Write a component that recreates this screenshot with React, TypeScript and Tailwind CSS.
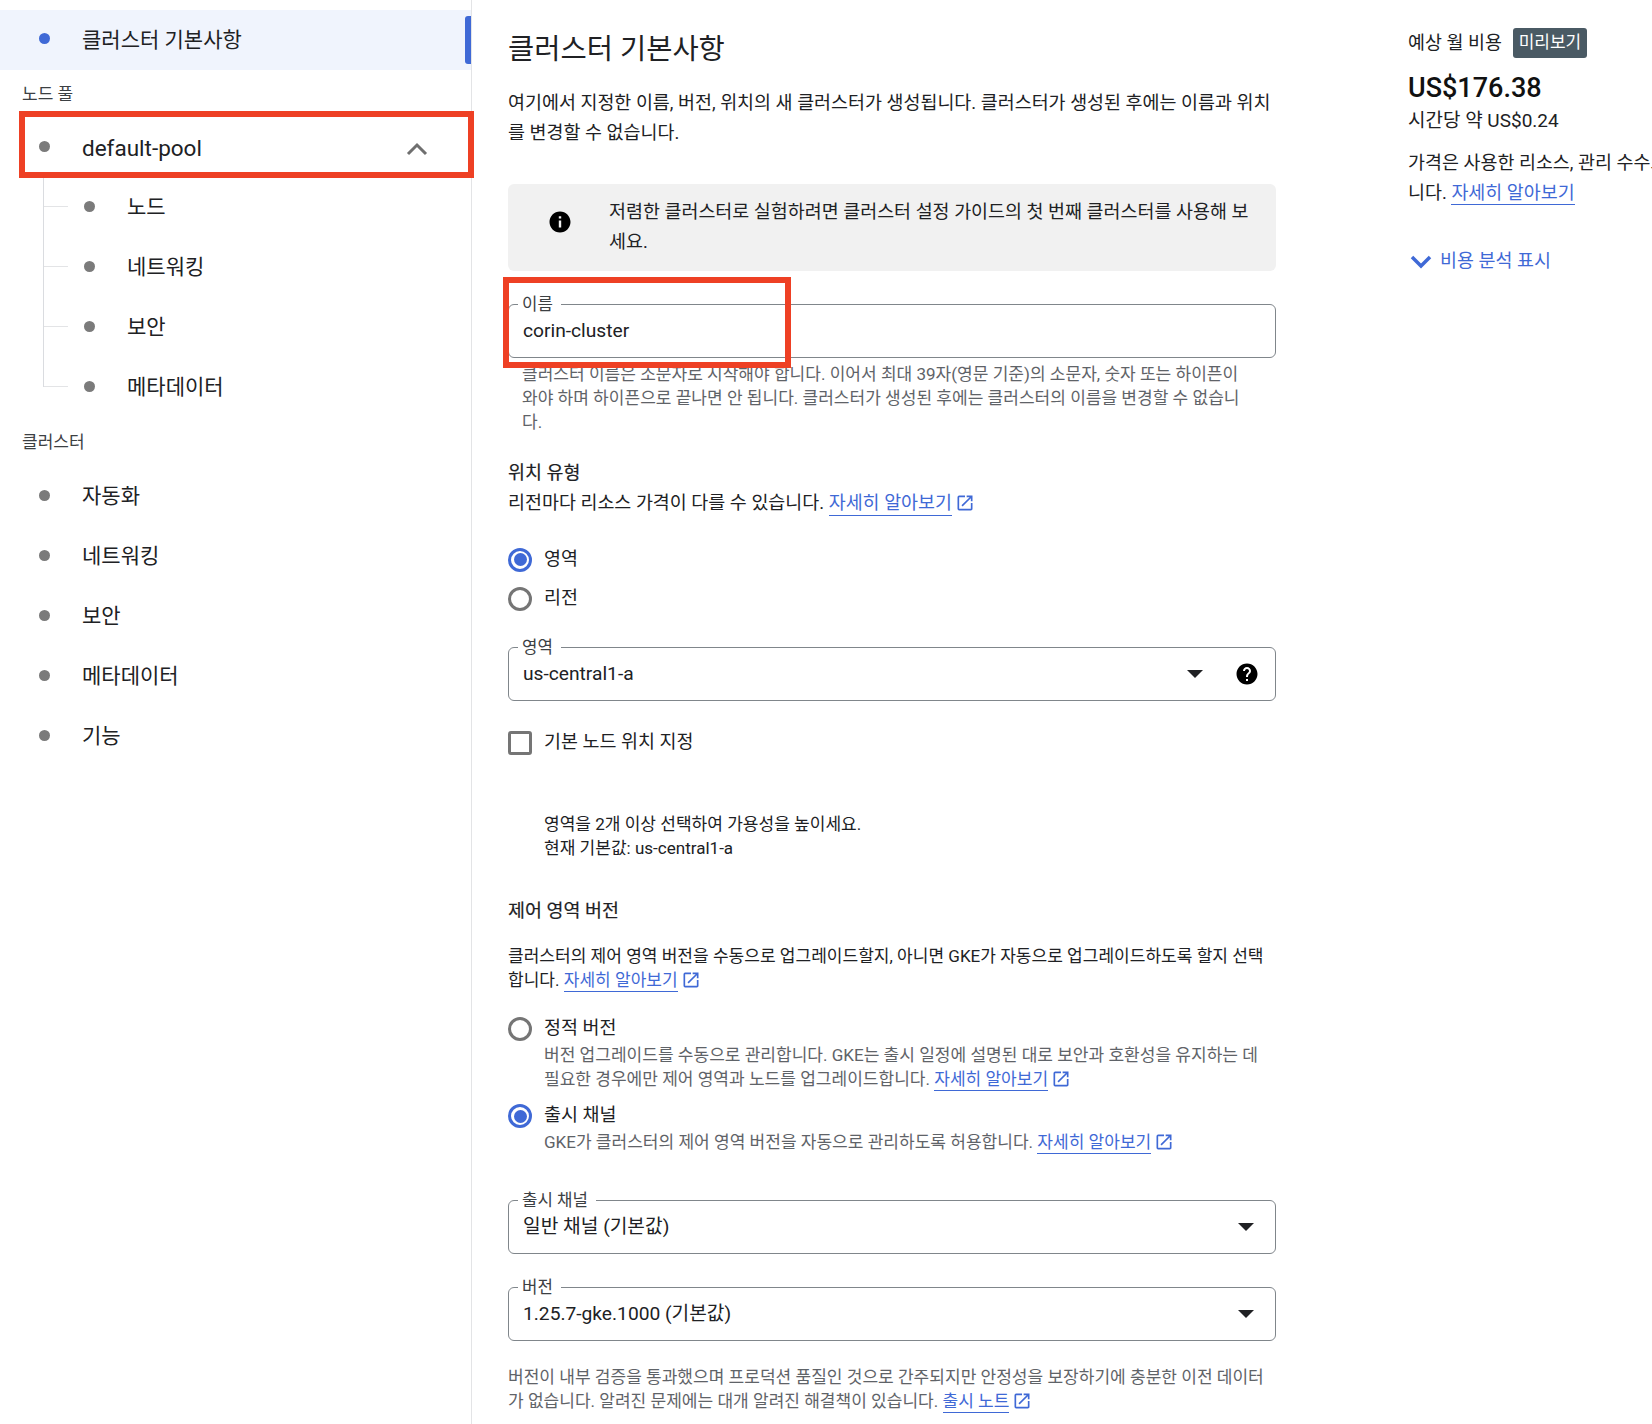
const font = { fontFamily: 'Roboto, "Noto Sans CJK KR", sans-serif' };

function Dot({ active, className }: { active?: boolean; className?: string }) {
  return <span className={`w-[11px] h-[11px] rounded-full shrink-0 -translate-y-[2px] ${active ? 'bg-[#3f69d6]' : 'bg-[#7b7b7b]'} ${className ?? ''}`} />;
}

function NavItem({ label }: { label: string }) {
  return (
    <div className="h-[60px] flex items-center pl-[39px]">
      <Dot />
      <span className="ml-[32px] text-[21px] text-[#202124]">{label}</span>
    </div>
  );
}

function SubItem({ label, last }: { label: string; last?: boolean }) {
  return (
    <div className="relative h-[60px] flex items-center pl-[84px]">
      <span className={`absolute left-[43px] top-0 w-px bg-[#dadce0] ${last ? 'h-[29px]' : 'h-[60px]'}`} />
      <span className="absolute left-[44px] top-[28px] w-[24px] h-px bg-[#e3e4e6]" />
      <Dot />
      <span className="ml-[32px] text-[21px] text-[#202124]">{label}</span>
    </div>
  );
}

function OpenIcon() {
  return (
    <svg width="20" height="20" viewBox="0 0 24 24" fill="#3f69d6" className="inline-block align-[-4px] ml-[3px]">
      <path d="M19 19H5V5h7V3H5a2 2 0 0 0-2 2v14a2 2 0 0 0 2 2h14c1.100 0 2-.9 2-2v-7h-2v7zM14 3v2h3.590l-9.830 9.830 1.410 1.410L19 6.410V10h2V3h-7z" />
    </svg>
  );
}

function Learn({ text = '자세히 알아보기' }: { text?: string }) {
  return (
    <span className="whitespace-nowrap text-[#3f69d6]">
      <span className="border-b border-[#3f69d6] pb-[1px]">{text}</span>
      <OpenIcon />
    </span>
  );
}

function Radio({ on }: { on?: boolean }) {
  return (
    <span className={`w-6 h-6 rounded-full border-[3px] flex items-center justify-center shrink-0 ${on ? 'border-[#3f69d6]' : 'border-[#757575]'}`}>
      {on && <span className="w-[13px] h-[13px] rounded-full bg-[#3f69d6]" />}
    </span>
  );
}

function Field({ label, value, help, arrow = true, className }: { label: string; value: string; help?: boolean; arrow?: boolean; className?: string }) {
  return (
    <div className={`relative h-[54px] border border-[#80868b] rounded-[6px] flex items-center pl-[14px] pr-[18px] text-[19.2px] text-[#202124] ${className ?? ''}`}>
      <span className="absolute left-[9px] -top-[12px] bg-white px-[4px] pr-[8px] text-[16.8px] leading-[22px] text-[#3c4043]">{label}</span>
      <span className="flex-1">{value}</span>
      {arrow && (
        <svg width="16" height="8" viewBox="0 0 16 8" className={help ? 'mr-[32px]' : 'mr-[3px]'}>
          <path d="M0 0h16L8 8z" fill="#202124" />
        </svg>
      )}
      {help && (
        <svg width="24" height="24" viewBox="0 0 24 24" className="mr-[-2px]">
          <path
            fill="#000"
            d="M12 1.500C6.200 1.500 1.500 6.200 1.500 12S6.200 22.500 12 22.500 22.500 17.800 22.500 12 17.800 1.500 12 1.500zm1 17.500h-2v-2h2v2zm2.100-7.800-.9.900c-.8.800-1.200 1.400-1.200 2.900h-2v-.500c0-1.100.4-2.100 1.200-2.900l1.200-1.300c.4-.3.600-.8.600-1.300 0-1.100-.9-2-2-2s-2 .9-2 2H8c0-2.200 1.800-4 4-4s4 1.800 4 4c0 .9-.4 1.700-.9 2.200z"
          />
        </svg>
      )}
    </div>
  );
}

export default function App() {
  return (
    <div className="w-[1652px] h-[1424px] overflow-hidden flex bg-white relative" style={font}>
      {/* Left nav */}
      <aside className="w-[472px] shrink-0 border-r border-[#e3e4e6] pt-[10px] relative">
        <div className="relative h-[60px] pt-[2px] bg-[#f0f4fd] flex items-center pl-[39px]">
          <Dot active className="-translate-y-[3px]" />
          <span className="ml-[32px] text-[21px] text-[#202124]">클러스터 기본사항</span>
          <span className="absolute right-0 top-[6px] w-[6px] h-[48px] rounded-l-[3px] bg-[#3f69d6]" />
        </div>
        <div className="h-[36px] pl-[22px] flex items-end text-[17px] text-[#3c4043] leading-[24px]">노드 풀</div>
        <div className="h-[72px] flex items-center pl-[39px] pt-[14px]">
          <Dot className="-translate-y-[3px]" />
          <span className="ml-[32px] text-[22.500px] text-[#202124] flex-1">default-pool</span>
          <svg width="22" height="14" viewBox="0 0 22 14" className="mr-[43px]">
            <path d="M2 12l9-9 9 9" fill="none" stroke="#6f6f6f" strokeWidth="3" />
          </svg>
        </div>
        <SubItem label="노드" />
        <SubItem label="네트워킹" />
        <SubItem label="보안" />
        <SubItem label="메타데이터" last />
        <div className="h-[36px] pl-[22px] flex items-end text-[17px] text-[#3c4043] leading-[24px]">클러스터</div>
        <div className="pt-[13px]">
          <NavItem label="자동화" />
          <NavItem label="네트워킹" />
          <NavItem label="보안" />
          <NavItem label="메타데이터" />
          <NavItem label="기능" />
        </div>
        {/* red highlight */}
        <div className="absolute left-[19px] top-[111px] w-[455px] h-[67px] border-[6px] border-[#ee4024]" />
      </aside>

      {/* Main column */}
      <main className="w-[768px] ml-[36px] shrink-0 relative text-[18.450px] text-[#202124]">
        <h1 className="text-[28.500px] leading-[40px] mt-[30px]">클러스터 기본사항</h1>
        <p className="mt-[18px] leading-[30px] break-all">
          여기에서 지정한 이름, 버전, 위치의 새 클러스터가 생성됩니다. 클러스터가 생성된 후에는 이름과 위치를 변경할 수 없습니다.
        </p>
        <div className="mt-[36px] h-[87px] rounded-[6px] bg-[#f1f1f1] flex items-center pl-[40px] pr-[20px] pb-[2px]">
          <svg width="24" height="24" viewBox="0 0 24 24" className="shrink-0 mb-[10px]">
            <path fill="#000" d="M12 1.500C6.200 1.500 1.500 6.200 1.500 12S6.200 22.500 12 22.500 22.500 17.800 22.500 12 17.800 1.500 12 1.500zm1.200 16h-2.400v-7h2.400v7zm0-9h-2.400V6.300h2.400v2.200z" />
          </svg>
          <p className="ml-[37px] leading-[30px] break-all">저렴한 클러스터로 실험하려면 클러스터 설정 가이드의 첫 번째 클러스터를 사용해 보세요.</p>
        </div>

        <Field label="이름" value="corin-cluster" arrow={false} className="mt-[33px]" />
        <p className="mt-[4px] px-[14px] pr-[30px] text-[17.050px] leading-[24px] text-[#5f6368] break-all">
          클러스터 이름은 소문자로 시작해야 합니다. 이어서 최대 39자(영문 기준)의 소문자, 숫자 또는 하이픈이 와야 하며 하이픈으로 끝나면 안 됩니다. 클러스터가 생성된 후에는 클러스터의 이름을 변경할 수 없습니다.
        </p>

        <div className="mt-[27px] leading-[24px] [-webkit-text-stroke:0.2px_#202124]">위치 유형</div>
        <p className="mt-[6px] leading-[24px]">
          리전마다 리소스 가격이 다를 수 있습니다. <Learn />
        </p>

        <div className="mt-[25px] flex items-center gap-[12px] h-[39px]"><Radio on /><span>영역</span></div>
        <div className="flex items-center gap-[12px] h-[40px]"><Radio /><span>리전</span></div>

        <Field label="영역" value="us-central1-a" help className="mt-[28px]" />

        <div className="mt-[30px] flex items-center gap-[12px] h-[24px]">
          <span className="w-6 h-6 rounded-[3px] border-[3px] border-[#757575] shrink-0" />
          <span>기본 노드 위치 지정</span>
        </div>

        <p className="mt-[57px] pl-[36px] text-[17.050px] leading-[24px]">
          영역을 2개 이상 선택하여 가용성을 높이세요.
          <br />
          현재 기본값: us-central1-a
        </p>

        <div className="mt-[39px] leading-[24px] [-webkit-text-stroke:0.2px_#202124]">제어 영역 버전</div>
        <p className="mt-[21px] text-[17.050px] leading-[24px] break-all">
          클러스터의 제어 영역 버전을 수동으로 업그레이드할지, 아니면 GKE가 자동으로 업그레이드하도록 할지 선택합니다. <Learn />
        </p>

        <div className="mt-[25px] flex items-center gap-[12px] h-[24px]"><Radio /><span>정적 버전</span></div>
        <p className="mt-[2px] pl-[36px] text-[17.050px] leading-[24px] text-[#5f6368] break-all">
          버전 업그레이드를 수동으로 관리합니다. GKE는 출시 일정에 설명된 대로 보안과 호환성을 유지하는 데 필요한 경우에만 제어 영역과 노드를 업그레이드합니다. <Learn />
        </p>
        <div className="mt-[13px] flex items-center gap-[12px] h-[24px]"><Radio on /><span>출시 채널</span></div>
        <p className="mt-[2px] pl-[36px] text-[17.050px] leading-[24px] text-[#5f6368]">
          GKE가 클러스터의 제어 영역 버전을 자동으로 관리하도록 허용합니다. <Learn />
        </p>

        <Field label="출시 채널" value="일반 채널 (기본값)" className="mt-[46px]" />
        <Field label="버전" value="1.25.7-gke.1000 (기본값)" className="mt-[33px]" />
        <p className="mt-[24px] text-[17.050px] leading-[24px] text-[#5f6368] break-all">
          버전이 내부 검증을 통과했으며 프로덕션 품질인 것으로 간주되지만 안정성을 보장하기에 충분한 이전 데이터가 없습니다. 알려진 문제에는 대개 알려진 해결책이 있습니다. <Learn text="출시 노트" />
        </p>

        {/* red highlight */}
        <div className="absolute left-[-5px] top-[277px] w-[288px] h-[91px] border-[6px] border-[#ee4024]" />
      </main>

      {/* Cost panel, runs off the right edge */}
      <section className="ml-[132px] w-[520px] shrink-0 text-[18.450px] text-[#202124]">
        <div className="mt-[28px] flex items-center h-[30px]">
          <span className="pt-[2px]">예상 월 비용</span>
          <span className="ml-[11px] h-[30px] w-[74px] rounded-[3px] bg-[#4a5a64] text-white text-[17px] flex items-center justify-center">미리보기</span>
        </div>
        <div className="mt-[12px] text-[27px] leading-[36px] font-medium text-[#111]">US$176.38</div>
        <div className="mt-[1px] leading-[28px] text-[19px]">시간당 약 US$0.24</div>
        <p className="mt-[13px] leading-[30px]">
          <span className="block whitespace-nowrap">가격은 사용한 리소스, 관리 수수료, 할인에 따라 달라집</span>
          <span className="block">니다. <span className="border-b border-[#3f69d6] text-[#3f69d6]">자세히 알아보기</span></span>
        </p>
        <div className="mt-[39px] flex items-center text-[#3f69d6] h-[30px]">
          <svg width="22" height="14" viewBox="0 0 22 14" className="ml-[2px] mr-[8px]">
            <path d="M2 2l9 9 9-9" fill="none" stroke="#3f69d6" strokeWidth="3.500" />
          </svg>
          비용 분석 표시
        </div>
      </section>
    </div>
  );
}
